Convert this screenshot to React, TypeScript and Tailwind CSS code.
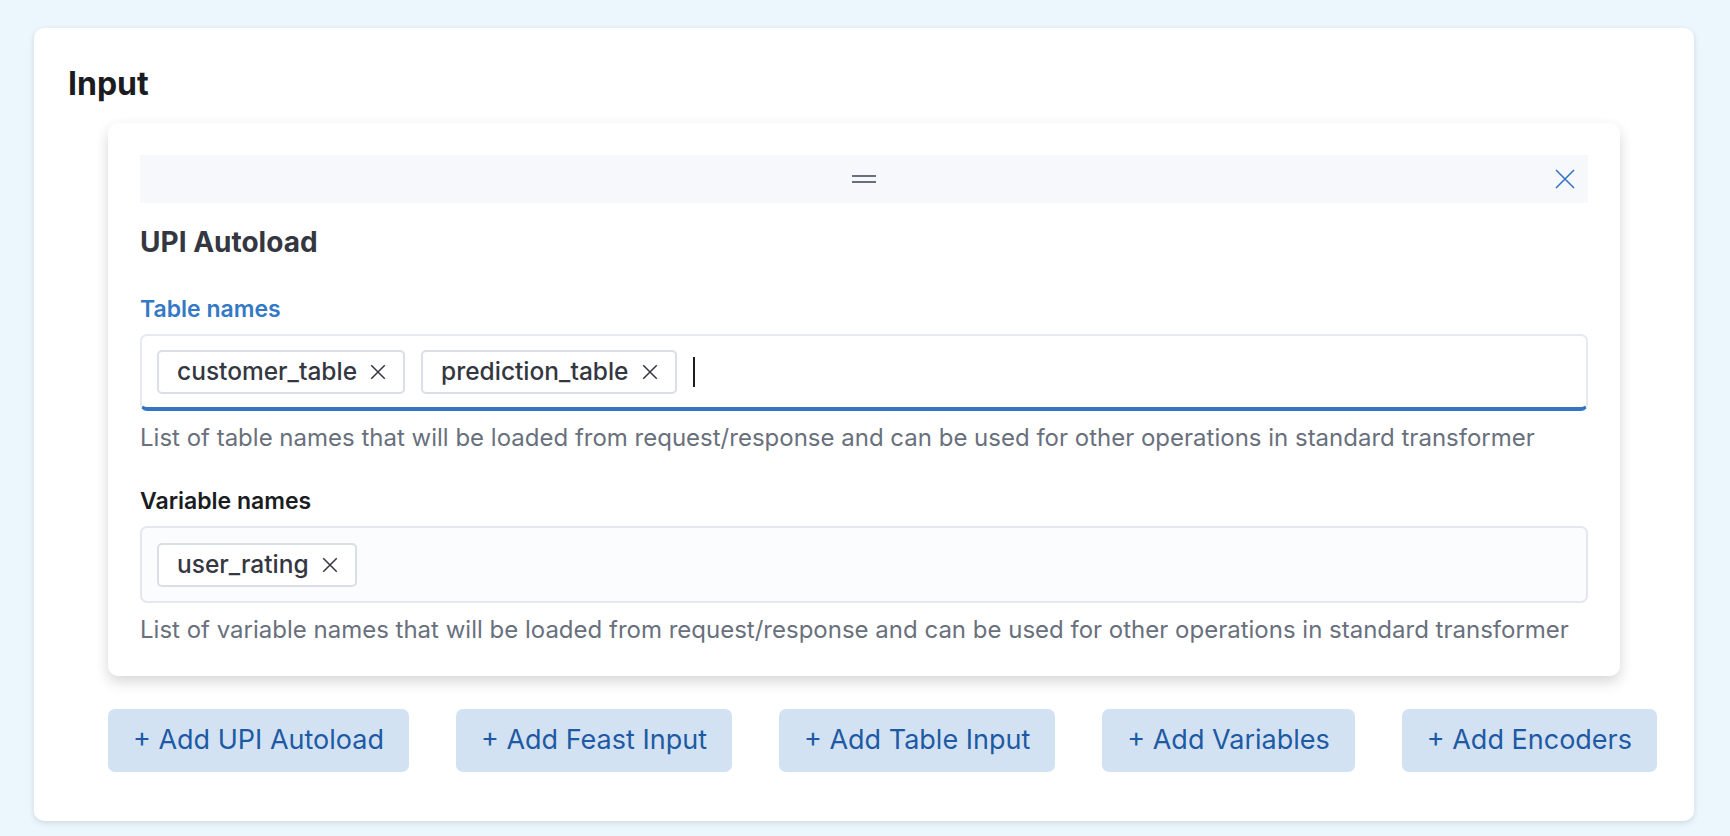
import React from 'react';

const font = { fontFamily: 'Inter, "Noto Sans", sans-serif' };

const Tag = ({ label }: { label: string }) => (
  <span className="inline-flex h-[44px] shrink-0 items-center gap-[12px] rounded-[5px] border-2 border-[#d9dee8] bg-white pl-[18px] pr-[16px] text-[24.5px] font-medium whitespace-nowrap text-[#343741]">
    {label}
    <svg width="18" height="18" viewBox="0 0 16 16" fill="none" stroke="#343741" strokeWidth="1.3">
      <path d="M2 2l12 12M14 2L2 14" />
    </svg>
  </span>
);

const Field = ({
  label,
  tags,
  help,
  focused,
}: {
  label: string;
  tags: string[];
  help: string;
  focused?: boolean;
}) => (
  <div>
    <div className={`text-[23px] font-semibold leading-[30px] ${focused ? 'text-[#3479c6]' : 'text-[#1a1c21]'}`}>
      {label}
    </div>
    <div
      className={`mt-[10px] flex h-[77px] items-center gap-[16px] overflow-hidden rounded-[7px] border-2 px-[15px] ${
        focused ? 'border-[#e6e9f1] border-b-[4px] border-b-[#3574c2] bg-white' : 'border-[#e3e7f0] bg-[#fbfcfd]'
      }`}
    >
      {tags.map(t => (
        <Tag key={t} label={t} />
      ))}
      {focused && <span className="h-[30px] w-[2px] bg-[#1a1c21]" />}
    </div>
    <div className="mt-[11px] text-[24px] leading-[32px] text-[#69707d]">{help}</div>
  </div>
);

const buttons = ['+ Add UPI Autoload', '+ Add Feast Input', '+ Add Table Input', '+ Add Variables', '+ Add Encoders'];

export default function App() {
  return (
    <div className="min-h-screen bg-[#ebf6fd] pt-[28px] pl-[34px] pr-[36px] pb-[16px]" style={font}>
      <div className="rounded-[10px] bg-white px-[34px] pt-[38px] pb-[49px] shadow-[0_2px_6px_rgba(0,0,0,0.12)]">
        <h1 className="text-[32px] font-bold leading-[36px] text-[#1a1c21]">Input</h1>

        <div className="mx-[40px] mt-[21px] rounded-[10px] bg-white p-[32px] pb-[30px] shadow-[0_6px_14px_rgba(0,0,0,0.16)]">
          <div className="relative flex h-[48px] items-center justify-center bg-[#f7f8fc]">
            <svg width="24" height="10" viewBox="0 0 24 10" fill="#69707d">
              <rect x="0" y="1" width="24" height="2" />
              <rect x="0" y="7" width="24" height="2" />
            </svg>
            <svg
              className="absolute right-[13px] top-[14px]"
              width="20"
              height="20"
              viewBox="0 0 20 20"
              fill="none"
              stroke="#3574c2"
              strokeWidth="1.6"
            >
              <path d="M1 1l18 18M19 1L1 19" />
            </svg>
          </div>

          <h2 className="mt-[22px] text-[28px] font-bold leading-[34px] text-[#343741]">UPI Autoload</h2>

          <div className="mt-[35px]">
            <Field
              label="Table names"
              focused
              tags={['customer_table', 'prediction_table']}
              help="List of table names that will be loaded from request/response and can be used for other operations in standard transformer"
            />
          </div>
          <div className="mt-[32px]">
            <Field
              label="Variable names"
              tags={['user_rating']}
              help="List of variable names that will be loaded from request/response and can be used for other operations in standard transformer"
            />
          </div>
        </div>

        <div className="mx-[40px] mt-[33px] flex gap-[47px]">
          {buttons.map(b => (
            <button
              key={b}
              className="h-[63px] shrink-0 whitespace-nowrap rounded-[7px] bg-[#d3e2f3] px-[25px] text-[27px] text-[#1e5aa4]"
            >
              {b}
            </button>
          ))}
        </div>
      </div>
    </div>
  );
}
